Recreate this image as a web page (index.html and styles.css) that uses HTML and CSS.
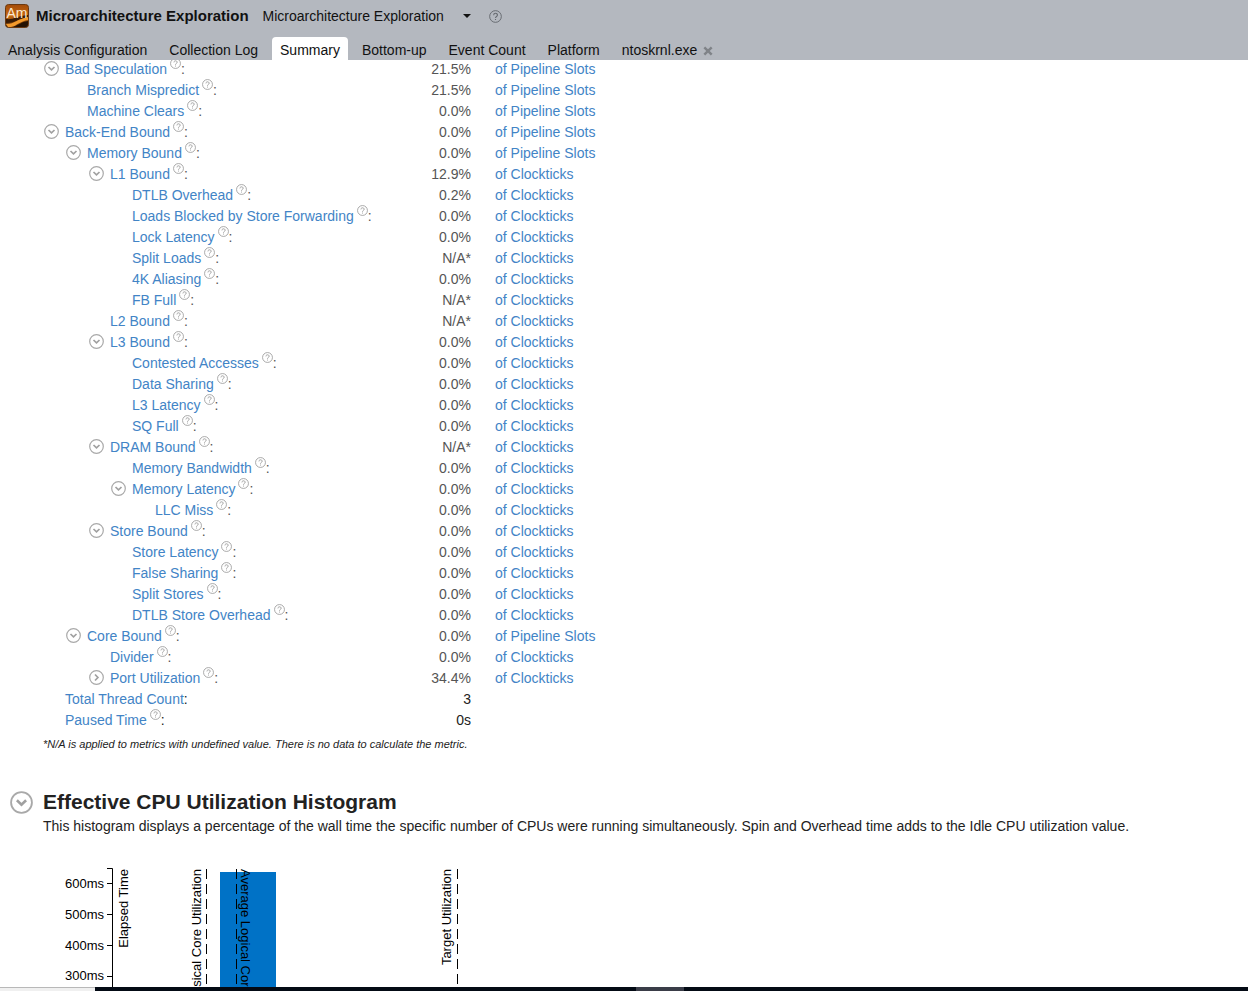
FILE: index.html
```html
<!DOCTYPE html>
<html lang="en">
<head>
<meta charset="utf-8">
<title>Microarchitecture Exploration</title>
<link rel="stylesheet" href="styles.css">
</head>
<body>
<svg class="defs" aria-hidden="true">
  <symbol id="down" viewBox="0 0 15 15"><circle cx="7.5" cy="7.5" r="6.8" fill="none" stroke="#a9a9a9" stroke-width="1.2"/><path d="M4.5 6 7.5 8.900 10.500 6" fill="none" stroke="#a0a0a0" stroke-width="1.7"/></symbol>
  <symbol id="right" viewBox="0 0 15 15"><circle cx="7.5" cy="7.5" r="6.8" fill="none" stroke="#a9a9a9" stroke-width="1.2"/><path d="M6 4.500 8.900 7.500 6 10.500" fill="none" stroke="#a0a0a0" stroke-width="1.7"/></symbol>
  <symbol id="help" viewBox="0 0 12 12"><circle cx="6" cy="6" r="5.4" fill="none" stroke="currentColor" stroke-width=".9"/><path d="M4.3 4.8C4.3 2.5 7.8 2.5 7.8 4.7 7.8 6 6 5.9 6 7.3M6 8.3V9.3" fill="none" stroke="currentColor" stroke-width="1"/></symbol>
</svg>
<header class="top">
  <div class="titlebar">
    <svg class="logo" viewBox="0 0 24 24" aria-hidden="true">
      <defs><linearGradient id="amber" x1="0" y1="0" x2="0" y2="1"><stop offset="0" stop-color="#a34b08"/><stop offset=".5" stop-color="#c86a12"/><stop offset="1" stop-color="#3a1c05"/></linearGradient></defs>
      <rect x=".5" y=".5" width="23" height="23" rx="3" fill="url(#amber)" stroke="#6b3a12"/>
      <path d="M1 15C9 16 11 12 23 11V14C14 14 11 19 1 19Z" fill="#3a1c05"/>
      <path d="M1 20C10 20 12 15 23 13V16C15 17 12 22 6 23H3Z" fill="#f39a2c"/>
      <path d="M9 23C14 21 16 18 23 17V21L21 23Z" fill="#241204"/>
      <text x="12" y="14" class="logo-text">Am</text>
    </svg>
    <h1 class="title">Microarchitecture Exploration</h1>
    <button class="viewpoint" type="button">Microarchitecture Exploration<svg class="caret" viewBox="0 0 8 4" aria-hidden="true"><path d="M0 0H8L4 4Z"/></svg></button>
    <button class="help-button" type="button" aria-label="Help"><svg viewBox="0 0 12 12"><use href="#help"/></svg></button>
  </div>
  <nav class="tabs">
    <a class="tab" href="#">Analysis Configuration</a>
    <a class="tab" href="#">Collection Log</a>
    <a class="tab active" href="#">Summary</a>
    <a class="tab" href="#">Bottom-up</a>
    <a class="tab" href="#">Event Count</a>
    <a class="tab" href="#">Platform</a>
    <a class="tab" href="#">ntoskrnl.exe</a>
    <button class="close" type="button" aria-label="Close ntoskrnl.exe"><svg viewBox="0 0 9 9"><path d="M1.2 1.2 7.8 7.8M7.8 1.2 1.2 7.8"/></svg></button>
  </nav>
</header>
<main class="content">
  <table class="metrics">
    <tbody>
    <tr><td class="l0"><button class="tg" aria-label="Collapse"><svg><use href="#down"/></svg></button><a href="#">Bad Speculation</a><svg class="q"><use href="#help"/></svg>:</td><td>21.5%</td><td><a href="#">of Pipeline Slots</a></td></tr>
    <tr><td class="l1 leaf"><a href="#">Branch Mispredict</a><svg class="q"><use href="#help"/></svg>:</td><td>21.5%</td><td><a href="#">of Pipeline Slots</a></td></tr>
    <tr><td class="l1 leaf"><a href="#">Machine Clears</a><svg class="q"><use href="#help"/></svg>:</td><td>0.0%</td><td><a href="#">of Pipeline Slots</a></td></tr>
    <tr><td class="l0"><button class="tg" aria-label="Collapse"><svg><use href="#down"/></svg></button><a href="#">Back-End Bound</a><svg class="q"><use href="#help"/></svg>:</td><td>0.0%</td><td><a href="#">of Pipeline Slots</a></td></tr>
    <tr><td class="l1"><button class="tg" aria-label="Collapse"><svg><use href="#down"/></svg></button><a href="#">Memory Bound</a><svg class="q"><use href="#help"/></svg>:</td><td>0.0%</td><td><a href="#">of Pipeline Slots</a></td></tr>
    <tr><td class="l2"><button class="tg" aria-label="Collapse"><svg><use href="#down"/></svg></button><a href="#">L1 Bound</a><svg class="q"><use href="#help"/></svg>:</td><td>12.9%</td><td><a href="#">of Clockticks</a></td></tr>
    <tr><td class="l3 leaf"><a href="#">DTLB Overhead</a><svg class="q"><use href="#help"/></svg>:</td><td>0.2%</td><td><a href="#">of Clockticks</a></td></tr>
    <tr><td class="l3 leaf"><a href="#">Loads Blocked by Store Forwarding</a><svg class="q"><use href="#help"/></svg>:</td><td>0.0%</td><td><a href="#">of Clockticks</a></td></tr>
    <tr><td class="l3 leaf"><a href="#">Lock Latency</a><svg class="q"><use href="#help"/></svg>:</td><td>0.0%</td><td><a href="#">of Clockticks</a></td></tr>
    <tr><td class="l3 leaf"><a href="#">Split Loads</a><svg class="q"><use href="#help"/></svg>:</td><td>N/A*</td><td><a href="#">of Clockticks</a></td></tr>
    <tr><td class="l3 leaf"><a href="#">4K Aliasing</a><svg class="q"><use href="#help"/></svg>:</td><td>0.0%</td><td><a href="#">of Clockticks</a></td></tr>
    <tr><td class="l3 leaf"><a href="#">FB Full</a><svg class="q"><use href="#help"/></svg>:</td><td>N/A*</td><td><a href="#">of Clockticks</a></td></tr>
    <tr><td class="l2 leaf"><a href="#">L2 Bound</a><svg class="q"><use href="#help"/></svg>:</td><td>N/A*</td><td><a href="#">of Clockticks</a></td></tr>
    <tr><td class="l2"><button class="tg" aria-label="Collapse"><svg><use href="#down"/></svg></button><a href="#">L3 Bound</a><svg class="q"><use href="#help"/></svg>:</td><td>0.0%</td><td><a href="#">of Clockticks</a></td></tr>
    <tr><td class="l3 leaf"><a href="#">Contested Accesses</a><svg class="q"><use href="#help"/></svg>:</td><td>0.0%</td><td><a href="#">of Clockticks</a></td></tr>
    <tr><td class="l3 leaf"><a href="#">Data Sharing</a><svg class="q"><use href="#help"/></svg>:</td><td>0.0%</td><td><a href="#">of Clockticks</a></td></tr>
    <tr><td class="l3 leaf"><a href="#">L3 Latency</a><svg class="q"><use href="#help"/></svg>:</td><td>0.0%</td><td><a href="#">of Clockticks</a></td></tr>
    <tr><td class="l3 leaf"><a href="#">SQ Full</a><svg class="q"><use href="#help"/></svg>:</td><td>0.0%</td><td><a href="#">of Clockticks</a></td></tr>
    <tr><td class="l2"><button class="tg" aria-label="Collapse"><svg><use href="#down"/></svg></button><a href="#">DRAM Bound</a><svg class="q"><use href="#help"/></svg>:</td><td>N/A*</td><td><a href="#">of Clockticks</a></td></tr>
    <tr><td class="l3 leaf"><a href="#">Memory Bandwidth</a><svg class="q"><use href="#help"/></svg>:</td><td>0.0%</td><td><a href="#">of Clockticks</a></td></tr>
    <tr><td class="l3"><button class="tg" aria-label="Collapse"><svg><use href="#down"/></svg></button><a href="#">Memory Latency</a><svg class="q"><use href="#help"/></svg>:</td><td>0.0%</td><td><a href="#">of Clockticks</a></td></tr>
    <tr><td class="l4 leaf"><a href="#">LLC Miss</a><svg class="q"><use href="#help"/></svg>:</td><td>0.0%</td><td><a href="#">of Clockticks</a></td></tr>
    <tr><td class="l2"><button class="tg" aria-label="Collapse"><svg><use href="#down"/></svg></button><a href="#">Store Bound</a><svg class="q"><use href="#help"/></svg>:</td><td>0.0%</td><td><a href="#">of Clockticks</a></td></tr>
    <tr><td class="l3 leaf"><a href="#">Store Latency</a><svg class="q"><use href="#help"/></svg>:</td><td>0.0%</td><td><a href="#">of Clockticks</a></td></tr>
    <tr><td class="l3 leaf"><a href="#">False Sharing</a><svg class="q"><use href="#help"/></svg>:</td><td>0.0%</td><td><a href="#">of Clockticks</a></td></tr>
    <tr><td class="l3 leaf"><a href="#">Split Stores</a><svg class="q"><use href="#help"/></svg>:</td><td>0.0%</td><td><a href="#">of Clockticks</a></td></tr>
    <tr><td class="l3 leaf"><a href="#">DTLB Store Overhead</a><svg class="q"><use href="#help"/></svg>:</td><td>0.0%</td><td><a href="#">of Clockticks</a></td></tr>
    <tr><td class="l1"><button class="tg" aria-label="Collapse"><svg><use href="#down"/></svg></button><a href="#">Core Bound</a><svg class="q"><use href="#help"/></svg>:</td><td>0.0%</td><td><a href="#">of Pipeline Slots</a></td></tr>
    <tr><td class="l2 leaf"><a href="#">Divider</a><svg class="q"><use href="#help"/></svg>:</td><td>0.0%</td><td><a href="#">of Clockticks</a></td></tr>
    <tr><td class="l2"><button class="tg" aria-label="Expand"><svg><use href="#right"/></svg></button><a href="#">Port Utilization</a><svg class="q"><use href="#help"/></svg>:</td><td>34.4%</td><td><a href="#">of Clockticks</a></td></tr>
    <tr class="total"><td class="l0 leaf"><a href="#">Total Thread Count</a>:</td><td>3</td><td></td></tr>
    <tr class="total"><td class="l0 leaf"><a href="#">Paused Time</a><svg class="q"><use href="#help"/></svg>:</td><td>0s</td><td></td></tr>
    </tbody>
  </table>
  <p class="note">*N/A is applied to metrics with undefined value. There is no data to calculate the metric.</p>
  <section class="histogram">
    <div class="section-head">
      <button class="section-toggle" type="button" aria-label="Collapse section"><svg><use href="#down"/></svg></button>
      <h2>Effective CPU Utilization Histogram</h2>
    </div>
    <p class="about">This histogram displays a percentage of the wall time the specific number of CPUs were running simultaneously. Spin and Overhead time adds to the Idle CPU utilization value.</p>
    <svg class="chart" width="440" height="260" viewBox="0 0 440 260" role="img" aria-label="Elapsed time by number of CPUs">
      <rect class="bar" x="177" y="4" width="56" height="256"/>
      <path class="axis" d="M64 .5H69.5V260M64 15.5H69M64 46.5H69M64 77.5H69M64 108.5H69"/>
      <path class="marker" d="M163.500 1V260M193.500 1V260M414.500 1V260"/>
      <g class="scale"><text x="61" y="20">600ms</text><text x="61" y="51">500ms</text><text x="61" y="82">400ms</text><text x="61" y="112">300ms</text></g>
      <text class="up" transform="translate(85 1) rotate(-90)">Elapsed Time</text>
      <text class="up" transform="translate(158 1) rotate(-90)">Average Physical Core Utilization</text>
      <text transform="translate(198 1) rotate(90)">Average Logical Core Utilization</text>
      <text class="up" transform="translate(408 1) rotate(-90)">Target Utilization</text>
    </svg>
  </section>
</main>
<footer class="taskbar"><div class="search"></div><div class="running"></div></footer>
</body>
</html>
```
FILE: styles.css
```css
* { box-sizing: border-box; }
body {
  display: flex;
  flex-direction: column;
  height: 100vh;
  margin: 0;
  overflow: hidden;
  background: #fff;
  color: #222;
  font: 14px/20px "Liberation Sans", Arial, sans-serif;
}
a { color: #4284c6; text-decoration: none; }
button { margin: 0; padding: 0; border: 0; background: none; color: inherit; font: inherit; }
h1, h2, p { margin: 0; }
.defs { position: absolute; width: 0; height: 0; }

.top { flex: none; background: #b4b8bf; color: #111; }
.titlebar { display: flex; align-items: center; height: 37px; padding: 0 5px 5px; }
.logo { width: 24px; height: 24px; margin-right: 7px; }
.logo-text { fill: #fbe9d0; font-size: 14px; text-anchor: middle; }
.title { margin-right: 14px; font-size: 15px; line-height: 20px; }
.viewpoint { display: flex; align-items: center; }
.caret { width: 8px; height: 4px; margin: 0 18px 0 19px; fill: #111; }
.help-button { display: flex; color: #666a70; }
.help-button svg { width: 13px; height: 13px; }
.tabs { display: flex; align-items: stretch; height: 23px; line-height: 26px; }
.tab { margin-right: 6px; padding: 0 8px; border-radius: 4px 4px 0 0; color: #111; white-space: nowrap; }
.tab.active { background: #fff; }
.close { display: flex; align-items: center; margin-left: -8px; padding-top: 4px; }
.close svg { width: 10px; height: 10px; fill: none; stroke: #7f8388; stroke-width: 2.2; }

.content { flex: 1; min-height: 0; overflow: hidden; }
.metrics { margin: -1px 0 0 44px; border-spacing: 0; color: #555; }
.metrics td { height: 21px; padding: 0; line-height: 21px; vertical-align: baseline; white-space: nowrap; }
.metrics td:nth-child(1) { width: 360px; }
.metrics td:nth-child(2) { width: 67px; text-align: right; }
.metrics td:nth-child(3) { padding-left: 24px; }
.metrics .total { color: #222; }
.metrics .l1 { padding-left: 22px; }
.metrics .l2 { padding-left: 45px; }
.metrics .l3 { padding-left: 67px; }
.metrics .l4 { padding-left: 90px; }
.leaf::before { content: ""; display: inline-block; width: 21px; }
.tg { width: 15px; height: 15px; margin-right: 6px; vertical-align: -2px; }
.tg svg { display: block; width: 15px; height: 15px; }
.q { width: 11px; height: 11px; margin: -6px 0 0 3px; color: #999; vertical-align: 5px; }
.note { margin: 4px 0 0 43px; font-size: 11px; line-height: 18px; font-style: italic; }

.histogram { margin-top: 36px; }
.section-head { display: flex; align-items: center; height: 26px; padding-left: 10px; }
.section-toggle { width: 23px; height: 23px; margin-right: 10px; }
.section-toggle svg { display: block; width: 23px; height: 23px; }
h2 { font-size: 21px; line-height: 26px; }
.about { margin: 1px 0 0 43px; }
.chart { display: block; margin: 32px 0 0 43px; font-size: 13px; fill: #000; }
.bar { fill: #0072c6; }
.axis { fill: none; stroke: #000; }
.marker { fill: none; stroke: #000; stroke-dasharray: 10 5; }
.scale, .up { text-anchor: end; }

.taskbar { display: flex; flex: none; height: 4px; background: #030a14; }
.search { width: 95px; border-top: 1px solid #b8b8b8; background: #f0f0f0; }
.running { width: 48px; margin-left: 541px; background: #3a3d48; }
```
